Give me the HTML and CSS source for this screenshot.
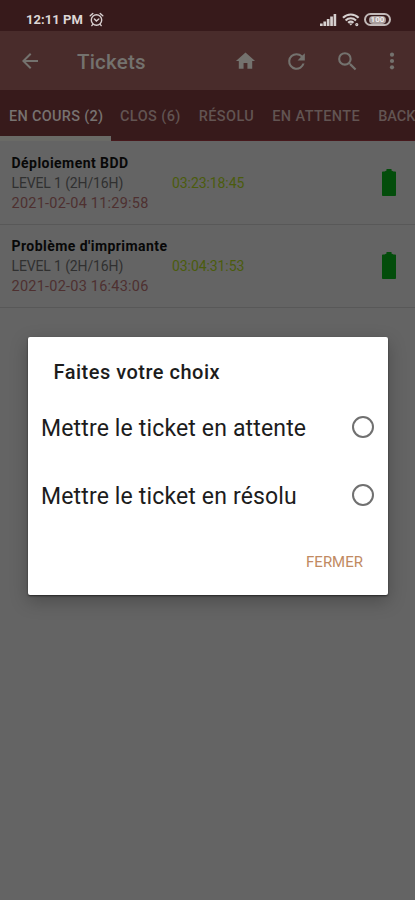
FILE: index.html
```html
<!DOCTYPE html>
<html lang="fr">
<head>
<meta charset="utf-8">
<title>Tickets</title>
<link rel="stylesheet" href="styles.css">
</head>
<body>
<div class="screen">
  <div class="status">
    <span class="clock">12:11 PM</span>
    <svg class="alarm" width="15" height="15" viewBox="0 0 15 15" fill="none" stroke="#d8d0d0" stroke-width="1.4" stroke-linecap="round"><circle cx="7.5" cy="8" r="5.2"/><path d="M1.2 3.8 3.8 1.5M13.8 3.8 11.2 1.5M5.4 7l2 2 2.4-2M3.8 12.4l-1 1.2M11.2 12.4l1 1.2"/></svg>
    <svg class="signal" width="17" height="13" viewBox="0 0 17 13" fill="#d6d0cf"><path d="M0 10.500h2.700V13H0zM3.400 8.500h2.700V13H3.400zM6.800 6h2.700v7H6.800zM10.200 3.500h2.700V13h-2.700zM13.600 1h2.600v12h-2.600z"/></svg>
    <svg class="wifi" width="18" height="14" viewBox="0 0 18 14" fill="none" stroke="#d6d0cf" stroke-width="2.1"><path d="M1 4.800C5.400.4 12.200.4 16.600 4.800M3.600 7.400c3-2.900 7.400-2.900 10.400 0M6.100 9.800c1.600-1.400 3.800-1.400 5.400 0"/><path d="M8.800 12.600 7 10.500h3.600z" fill="#d6d0cf" stroke="none"/><circle cx="14.800" cy="11.600" r="1" stroke-width="1.200"/></svg>
    <span class="battery"><span>100</span></span>
  </div>
  <div class="appbar">
    <svg class="back" width="24" height="24" viewBox="0 0 24 24" fill="#74726e"><path d="M20 11H7.830l5.590-5.590L12 4l-8 8 8 8 1.410-1.410L7.830 13H20v-2z"/></svg>
    <h1>Tickets</h1>
    <svg class="home" width="23" height="24" viewBox="0 0 24 24" fill="#74726e"><path d="M10 20v-6h4v6h5v-8h3L12 3 2 12h3v8z"/></svg>
    <svg class="refresh" width="25" height="25" viewBox="0 0 24 24" fill="#74726e"><path d="M17.650 6.350A7.960 7.960 0 0 0 12 4a8 8 0 1 0 7.730 10h-2.080A6 6 0 1 1 12 6c1.660 0 3.140.69 4.220 1.780L13 11h7V4l-2.350 2.350z"/></svg>
    <svg class="search" width="25" height="25" viewBox="0 0 24 24" fill="#74726e"><path d="M15.500 14h-.79l-.28-.27A6.470 6.470 0 0 0 16 9.500 6.500 6.500 0 1 0 9.500 16c1.610 0 3.090-.59 4.230-1.570l.27.28v.79l5 4.990L20.490 19l-4.990-5zm-6 0a4.500 4.500 0 1 1 0-9 4.500 4.500 0 0 1 0 9z"/></svg>
    <svg class="more" width="6" height="20" viewBox="0 0 6 20" fill="#74726e"><circle cx="3" cy="3.700" r="2.100"/><circle cx="3" cy="10" r="2.100"/><circle cx="3" cy="16.300" r="2.100"/></svg>
  </div>
  <div class="tabs">
    <div class="tab active">EN COURS (2)</div>
    <div class="tab">CLOS (6)</div>
    <div class="tab">RÉSOLU</div>
    <div class="tab">EN ATTENTE</div>
    <div class="tab last">BACK</div>
  </div>
  <div class="list">
    <div class="row">
      <div class="info">
        <div class="name">Déploiement BDD</div>
        <div class="meta"><span class="level">LEVEL 1 (2H/16H)</span><span class="timer">03:23:18:45</span></div>
        <div class="date">2021-02-04 11:29:58</div>
      </div>
      <svg class="cell" width="14" height="27" viewBox="0 0 14 27" fill="#034d0b"><path d="M4.500 0h5v1.500l2 1H13.200q.8 0 .8.800V26q0 1-.8 1H.8Q0 27 0 26V3.300q0-.8.800-.8H2.500l2-1z"/></svg>
    </div>
    <div class="row">
      <div class="info">
        <div class="name">Problème d'imprimante</div>
        <div class="meta"><span class="level">LEVEL 1 (2H/16H)</span><span class="timer">03:04:31:53</span></div>
        <div class="date">2021-02-03 16:43:06</div>
      </div>
      <svg class="cell" width="14" height="27" viewBox="0 0 14 27" fill="#034d0b"><path d="M4.500 0h5v1.500l2 1H13.200q.8 0 .8.800V26q0 1-.8 1H.8Q0 27 0 26V3.300q0-.8.800-.8H2.500l2-1z"/></svg>
    </div>
  </div>
  <div class="dialog">
    <h2>Faites votre choix</h2>
    <div class="choice"><span>Mettre le ticket en attente</span><i class="radio"></i></div>
    <div class="choice"><span>Mettre le ticket en résolu</span><i class="radio"></i></div>
    <div class="actions"><span class="close">FERMER</span></div>
  </div>
</div>
</body>
</html>
```
FILE: styles.css
```css
* { box-sizing: border-box; }
body { margin: 0; font-family: Roboto, "Liberation Sans", sans-serif; }
h1, h2 { margin: 0; font-weight: 500; }
svg { display: block; flex: none; }
span { white-space: nowrap; }
.screen { position: relative; width: 415px; height: 900px; overflow: hidden; background: #646464; }

.status { display: flex; align-items: center; height: 31px; padding: 8px 24px 0 26px; background: #371a1b; color: #ddd6d5; }
.clock { width: 63px; font-size: 13px; font-weight: 700; letter-spacing: .05px; }
.signal { margin-left: auto; }
.wifi { margin-left: 5px; }
.battery { display: flex; align-items: center; justify-content: center; width: 27px; height: 13px; margin-left: 4px; border: 2px solid #c2b9b8; border-radius: 7px; }
.battery span { padding: 0 2px; border-radius: 4px; background: #a89d9c; color: #f1eded; font-size: 8px; line-height: 8px; font-weight: 700; }

.appbar { display: flex; align-items: center; height: 59px; padding: 1px 0 0 18px; background: #492c2b; color: #74726e; }
.appbar h1 { width: 157px; margin-left: 35px; padding-top: 1px; font-size: 20.5px; letter-spacing: .2px; }
.refresh { margin-left: 27px; }
.search { margin-left: 26px; }
.more { margin-left: 29px; }

.tabs { display: flex; height: 51px; background: #371a1b; border-bottom: 1px solid #46191c; color: #625452; font-size: 14.5px; font-weight: 500; letter-spacing: .4px; white-space: nowrap; }
.tab { flex: none; height: 51px; padding: 1px 9px 0; line-height: 51px; }
.tab.active { width: 111px; border-bottom: 5px solid #6a6a66; color: #777270; letter-spacing: .3px; }
.tab.last { letter-spacing: 0; }

.list { color: #303030; }
.row { display: flex; justify-content: space-between; height: 83px; padding: 12px 19px 0 11.500px; border-bottom: 1px solid #585858; }
.row:first-child { height: 84px; }
.row + .row { padding-top: 11px; }
.name { height: 20px; line-height: 20px; font-size: 14px; font-weight: 700; letter-spacing: .45px; color: #080808; }
.meta { display: flex; height: 20px; line-height: 20px; font-size: 14px; letter-spacing: -.13px; }
.level { width: 160.500px; }
.timer { color: #4b5c0d; letter-spacing: -.08px; }
.date { height: 20px; line-height: 22px; font-size: 14.500px; letter-spacing: .23px; color: #4e3030; }
.cell { margin-top: 16px; }

.dialog { position: absolute; left: 28px; top: 337px; width: 360px; height: 258px; background: #fff; border-radius: 2px; box-shadow: 0 1px 2px rgba(0,0,0,.55), 0 6px 18px rgba(0,0,0,.25); color: #1c1c1c; }
.dialog h2 { height: 57px; padding: 23px 0 0 25.500px; font-size: 20px; line-height: 24px; letter-spacing: .5px; }
.choice { display: flex; align-items: center; justify-content: space-between; height: 67.500px; padding: 0 14px 0 13px; font-size: 23px; letter-spacing: .15px; }
.choice span { padding-top: 2px; }
.radio { width: 22px; height: 22px; margin-top: -1px; border: 2px solid #707070; border-radius: 50%; }
.actions { display: flex; justify-content: flex-end; padding: 23px 25px 0 0; font-size: 15px; line-height: 20px; color: #c18a62; }
```
